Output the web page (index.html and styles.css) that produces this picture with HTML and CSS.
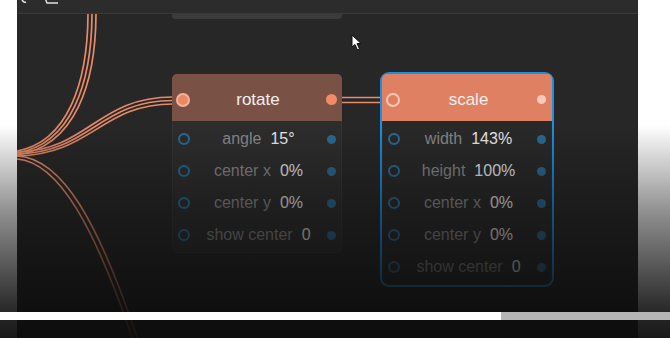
FILE: index.html
```html
<!DOCTYPE html>
<html lang="en">
<head>
  <meta charset="UTF-8">
  <title>Node editor - video frame</title>
  <link rel="stylesheet" href="styles.css">
</head>
<body>
  <div class="frame">
    <div class="toolbar">
      <svg class="tool-icons" width="60" height="13" viewBox="0 0 60 13">
        <path d="M3 -3 C4 1, 6 3, 8 2" fill="none" stroke="#e0e0e0" stroke-width="1.5"/>
        <path d="M27 -2 L29 3 L40 3 M33 -2 L40 -2" fill="none" stroke="#e0e0e0" stroke-width="1.5"/>
      </svg>
    </div>
    <div class="canvas">
      <div class="node-stub"></div>

      <svg class="wires" width="621" height="324" viewBox="0 0 621 324">
        <g fill="none" stroke="#e88a68" stroke-width="1.7">
          <!-- up to the node above -->
          <path d="M0 137 C 50 128, 71 70, 71 -2"/>
          <path d="M0 139 C 54 130, 75 70, 75 -2"/>
          <path d="M0 141 C 58 132, 79 70, 79 -2"/>
          <!-- into rotate -->
          <path d="M0 138 C 72 136, 80 83, 156 83"/>
          <path d="M0 140 C 74 138, 82 86.5, 156 86.5"/>
          <path d="M0 142 C 76 140, 84 90, 156 90"/>
          <!-- down -->
          <path d="M0 142 C 46 144, 82 210, 121 326"/>
          <path d="M0 145 C 42 148, 78 214, 116 326"/>
          <!-- rotate to scale -->
          <path d="M324 83.5 L 366 83.5"/>
          <path d="M324 88.5 L 366 88.5"/>
        </g>
      </svg>

      <div class="node node-rotate">
        <div class="node-head">
          <span class="port-in"></span>
          <span class="title">rotate</span>
          <span class="port-out"></span>
        </div>
        <div class="row"><span class="pin-in"></span><span class="field"><span class="label">angle</span><span class="value">15°</span></span><span class="pin-out"></span></div>
        <div class="row"><span class="pin-in"></span><span class="field"><span class="label">center x</span><span class="value">0%</span></span><span class="pin-out"></span></div>
        <div class="row"><span class="pin-in"></span><span class="field"><span class="label">center y</span><span class="value">0%</span></span><span class="pin-out"></span></div>
        <div class="row"><span class="pin-in"></span><span class="field"><span class="label">show center</span><span class="value">0</span></span><span class="pin-out"></span></div>
      </div>

      <div class="node node-scale selected">
        <div class="node-head">
          <span class="port-in"></span>
          <span class="title">scale</span>
          <span class="port-out"></span>
        </div>
        <div class="row"><span class="pin-in"></span><span class="field"><span class="label">width</span><span class="value">143%</span></span><span class="pin-out"></span></div>
        <div class="row"><span class="pin-in"></span><span class="field"><span class="label">height</span><span class="value">100%</span></span><span class="pin-out"></span></div>
        <div class="row"><span class="pin-in"></span><span class="field"><span class="label">center x</span><span class="value">0%</span></span><span class="pin-out"></span></div>
        <div class="row"><span class="pin-in"></span><span class="field"><span class="label">center y</span><span class="value">0%</span></span><span class="pin-out"></span></div>
        <div class="row"><span class="pin-in"></span><span class="field"><span class="label">show center</span><span class="value">0</span></span><span class="pin-out"></span></div>
      </div>

      <svg class="cursor" width="11" height="17" viewBox="0 0 11 17">
        <path d="M1 1 L1 13 L4 10.5 L6.5 16 L8.5 15 L6 9.5 L10 9.5 Z" fill="#fff" stroke="#111" stroke-width="1"/>
      </svg>
    </div>
  </div>

  <!-- video player chrome -->
  <div class="shade"></div>
  <div class="progress">
    <div class="progress-played"></div>
  </div>
</body>
</html>
```

FILE: styles.css
```css
body {
  margin: 0;
  width: 670px;
  height: 338px;
  background-color: #fff;
  font-family: 'Liberation Sans', Arial, sans-serif;
  position: relative;
  overflow: hidden;
}

.frame {
  margin-left: 17px;
  width: 621px;
  height: 338px;
  background-color: #272727;
  display: flex;
  flex-direction: column;
}

.toolbar {
  height: 13px;
  background-color: #2c2c2c;
  border-bottom: 1px solid #3a3a3a;
  flex-shrink: 0;
}

.tool-icons {
  display: block;
  margin-left: 1px;
}

.canvas {
  flex: 1;
  position: relative;
  overflow: hidden;
}

.node-stub {
  position: absolute;
  left: 155px;
  top: 0;
  width: 170px;
  height: 5px;
  background-color: #3b3b3b;
  border-radius: 0 0 4px 4px;
}

.wires {
  position: absolute;
  left: 0;
  top: 0;
}

/* Nodes */
.node {
  position: absolute;
  top: 60px;
  width: 170px;
  box-sizing: border-box;
  background-color: #2d2d2d;
  border: 1px solid #363636;
  border-radius: 6px;
  padding-bottom: 1px;
}

.node-rotate {
  left: 155px;
}

.node-scale {
  left: 365px;
  background-color: #292929;
  border-color: #2c2c2c;
}

.selected {
  box-shadow: 0 0 0 2px #1a8fe3;
  border-radius: 7px;
}

.node-head {
  height: 47px;
  box-sizing: border-box;
  margin: -1px -1px 2px;
  border-radius: 5px 5px 0 0;
  display: flex;
  align-items: center;
  padding: 4px 5px 0 4px;
}

.node-rotate .node-head {
  background-color: #7a5245;
}

.node-scale .node-head {
  background-color: #e08062;
}

.title {
  flex: 1;
  text-align: center;
  color: #f0f0f0;
  font-size: 17px;
}

.port-in {
  width: 10px;
  height: 10px;
  border-radius: 50%;
  border: 2px solid #f4b39a;
  background-color: #ec8664;
}

.port-out {
  width: 11px;
  height: 11px;
  border-radius: 50%;
  background-color: #f08c6c;
}

.node-scale .port-in {
  border-color: #f6c7b4;
  background-color: transparent;
}

.node-scale .port-out {
  width: 9px;
  height: 9px;
  margin-right: 1px;
  background-color: #f7cbbb;
}

.row {
  height: 32px;
  display: flex;
  align-items: center;
  padding: 0 5px 0 5px;
}

.field {
  flex: 1;
  display: flex;
  justify-content: center;
  gap: 9px;
  font-size: 16px;
}

.label {
  color: #8a8a8a;
}

.value {
  color: #ececec;
}

.pin-in {
  width: 8px;
  height: 8px;
  border-radius: 50%;
  border: 2px solid #2a6d99;
}

.pin-out {
  width: 9px;
  height: 9px;
  border-radius: 50%;
  background-color: #2a6a94;
}

.cursor {
  position: absolute;
  left: 334px;
  top: 20px;
}

/* Player overlay */
.shade {
  position: absolute;
  left: 0;
  top: 0;
  width: 670px;
  height: 338px;
  background: linear-gradient(to bottom,
    rgba(12, 12, 12, 0) 125px,
    rgba(12, 12, 12, 0.45) 210px,
    rgba(12, 12, 12, 0.88) 310px,
    rgba(12, 12, 12, 0.95) 338px);
  pointer-events: none;
}

.progress {
  position: absolute;
  left: 0;
  top: 312px;
  width: 670px;
  height: 8px;
  background-color: #b5b5b5;
}

.progress-played {
  width: 501px;
  height: 8px;
  background-color: #fff;
}
```
